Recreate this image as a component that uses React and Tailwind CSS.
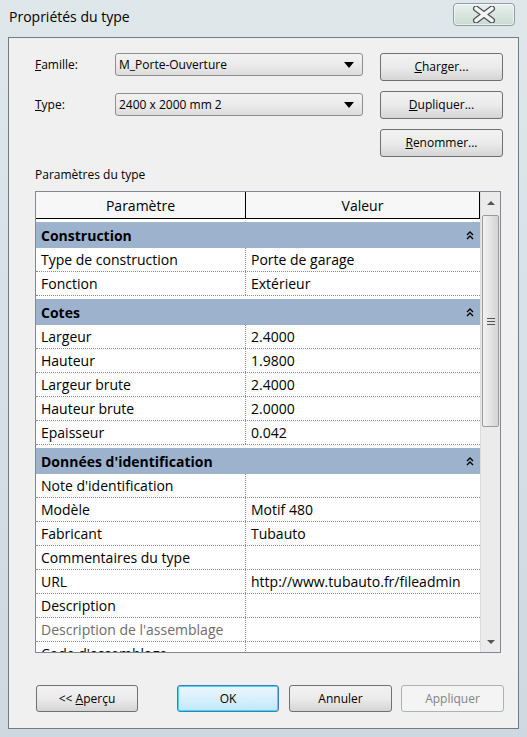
import React from "react";

const F = { fontFamily: "'Open Sans', 'Noto Sans', sans-serif" };

function Chevrons() {
  return (
    <svg width="8" height="9" viewBox="0 0 8 9" className="block">
      <path d="M1 4 L4 1 L7 4" fill="none" stroke="#000" strokeWidth="1.4" />
      <path d="M1 8 L4 5 L7 8" fill="none" stroke="#000" strokeWidth="1.4" />
    </svg>
  );
}

function Combo({ value }) {
  return (
    <div className="w-[248px] h-[23px] rounded-[3px] border border-[#8e8f8f] bg-gradient-to-b from-[#f2f2f2] via-[#ebebeb] to-[#dcdcdc] flex items-center pl-[3px] pr-[8px] text-[12px] text-black">
      <span className="flex-1">{value}</span>
      <svg width="10" height="6" viewBox="0 0 10 6"><path d="M0 0 H10 L5 6 Z" fill="#000" /></svg>
    </div>
  );
}

function Btn({ children, w = "w-[123px]", h = "h-[28px]", extra = "border-[#707070] from-[#f2f2f2] via-[#ebebeb] to-[#d5d5d5] text-black" }) {
  return (
    <div className={`${w} ${h} rounded-[3px] border bg-gradient-to-b flex items-center justify-center text-[12px] ${extra}`}>
      {children}
    </div>
  );
}

function Group({ label }) {
  return (
    <div className="h-[29px] pt-[3px] flex flex-col bg-white">
      <div className="h-[26px] bg-[#9db3cd] flex items-center justify-between pl-[5px] pr-[6px] text-[14px] font-bold text-black">
        <span>{label}</span>
        <Chevrons />
      </div>
    </div>
  );
}

function Row({ p, v, muted }) {
  return (
    <div className="h-[24px] flex border-b border-dotted border-[#8a8a8a] bg-white text-[14px]">
      <div className={`w-[210px] shrink-0 pl-[5px] flex items-center border-r border-dotted border-[#8a8a8a] whitespace-nowrap ${muted ? "text-[#6d6d6d]" : "text-black"}`}>{p}</div>
      <div className="flex-1 pl-[5px] flex items-center text-black whitespace-nowrap overflow-hidden">{v}</div>
    </div>
  );
}

export default function App() {
  return (
    <div style={F} className="w-[527px] h-[737px] overflow-hidden bg-gradient-to-b from-[#dfe7eb] via-[#d6e0e7] to-[#cdd8e0] flex flex-col">
      <div className="h-[37px] flex items-start justify-between pl-[9px] pr-[12px] shrink-0">
        <div className="pt-[6px] text-[14px] text-black">Propriétés du type</div>
        <div className="mt-[3px] w-[62px] h-[23px] rounded-[4px] border border-[#8d9ca6] bg-gradient-to-b from-[#e9f0ee] to-[#c9dcd0] flex items-center justify-center shadow-[inset_0_0_0_1px_rgba(255,255,255,0.6)]">
          <svg width="24" height="17" viewBox="0 0 24 17">
            <path d="M4 2.5 L20 14.5 M20 2.5 L4 14.5" stroke="#4a5058" strokeWidth="6" strokeLinecap="round" />
            <path d="M4 2.5 L20 14.5 M20 2.5 L4 14.5" stroke="#f4f4f4" strokeWidth="3.6" strokeLinecap="round" />
          </svg>
        </div>
      </div>
      <div className="mx-[8px] h-[692px] border border-[#6e7c88] bg-[#f0f0f0] flex flex-col shrink-0">
        <div className="flex pl-[26px] pt-[15px]">
          <div className="flex flex-col gap-[16px]">
            <div className="flex items-center h-[23px]">
              <span className="w-[80px] text-[12px] text-black"><u>F</u>amille:</span>
              <Combo value="M_Porte-Ouverture" />
            </div>
            <div className="flex items-center h-[23px] mt-[1px]">
              <span className="w-[80px] text-[12px] text-black"><u>T</u>ype:</span>
              <Combo value="2400 x 2000 mm 2" />
            </div>
          </div>
          <div className="ml-[17px] flex flex-col gap-[10px]">
            <Btn><span><u>C</u>harger...</span></Btn>
            <Btn><span><u>D</u>upliquer...</span></Btn>
            <Btn><span><u>R</u>enommer...</span></Btn>
          </div>
        </div>
        <div className="pl-[26px] mt-[9px] text-[12px] text-black h-[18px]">Paramètres du type</div>
        <div className="ml-[26px] mt-[7px] w-[466px] h-[462px] border border-[#828790] bg-white flex">
          <div className="flex-1 flex flex-col overflow-hidden">
            <div className="h-[27px] shrink-0 flex bg-[#f7f7f7] border-b border-black text-[14px] text-black">
              <div className="w-[210px] border-r border-black flex items-center justify-center">Paramètre</div>
              <div className="flex-1 flex items-center justify-center border-r border-black">Valeur</div>
            </div>
            <div className="flex-1 overflow-hidden">
              <Group label="Construction" />
              <Row p="Type de construction" v="Porte de garage" />
              <Row p="Fonction" v="Extérieur" />
              <Group label="Cotes" />
              <Row p="Largeur" v="2.4000" />
              <Row p="Hauteur" v="1.9800" />
              <Row p="Largeur brute" v="2.4000" />
              <Row p="Hauteur brute" v="2.0000" />
              <Row p="Epaisseur" v="0.042" />
              <Group label="Données d'identification" />
              <Row p="Note d'identification" v="" />
              <Row p="Modèle" v="Motif 480" />
              <Row p="Fabricant" v="Tubauto" />
              <Row p="Commentaires du type" v="" />
              <Row p="URL" v="http://www.tubauto.fr/fileadmin" />
              <Row p="Description" v="" />
              <Row p="Description de l'assemblage" v="" muted />
              <Row p="Code d'assemblage" v="" />
            </div>
          </div>
          <div className="w-[20px] shrink-0 bg-[#ebebeb] border-l border-[#dcdcdc] flex flex-col items-center">
            <div className="h-[21px] flex items-center justify-center">
              <svg width="8" height="4" viewBox="0 0 8 4"><path d="M0 4 L4 0 L8 4 Z" fill="#555" /></svg>
            </div>
            <div className="w-[17px] h-[212px] mt-[2px] rounded-[2px] border border-[#9a9a9a] bg-gradient-to-r from-[#f2f2f2] via-[#e4e4e4] to-[#d4d4d4] flex items-center justify-center">
              <svg width="8" height="7" viewBox="0 0 8 7"><path d="M0 0.5 H8 M0 3.5 H8 M0 6.5 H8" stroke="#555" strokeWidth="1" /></svg>
            </div>
            <div className="flex-1" />
            <div className="h-[21px] flex items-center justify-center">
              <svg width="8" height="4" viewBox="0 0 8 4"><path d="M0 0 L8 0 L4 4 Z" fill="#555" /></svg>
            </div>
          </div>
        </div>
        <div className="flex pl-[27px] mt-[32px] items-center">
          <Btn w="w-[102px]" h="h-[27px]"><span>&lt;&lt; <u>A</u>perçu</span></Btn>
          <div className="ml-[39px]">
            <Btn w="w-[102px]" h="h-[27px]" extra="border-[#3c7fb1] shadow-[inset_0_0_0_1px_#48d3ff] from-[#eaf6fd] via-[#d9f0fc] to-[#bee6fd] text-black">OK</Btn>
          </div>
          <div className="ml-[10px]">
            <Btn w="w-[103px]" h="h-[27px]">Annuler</Btn>
          </div>
          <div className="ml-[9px]">
            <Btn w="w-[103px]" h="h-[27px]" extra="border-[#adb2b5] from-[#f4f4f4] via-[#f4f4f4] to-[#f4f4f4] text-[#838383]">Appliquer</Btn>
          </div>
        </div>
      </div>
    </div>
  );
}
